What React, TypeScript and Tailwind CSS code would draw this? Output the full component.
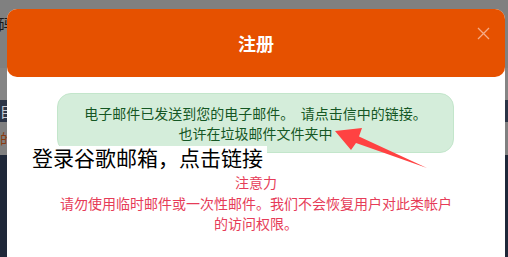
export default function App() {
  return (
    <div className="relative h-[257px] w-[508px] overflow-hidden bg-[#808080] font-['Noto_Sans_CJK_SC','Noto_Sans',sans-serif]">
      {/* page behind the backdrop */}
      <div className="flex h-full flex-col">
        <div className="h-[68px] pt-[14px] text-[15px] leading-5 text-[#1a1a1a]">
          <span className="-ml-[2px]">码</span>
        </div>
        <div className="h-[32px] bg-[#858585]" />
        <div className="h-[22px] bg-[#2b3446] text-[14px] leading-[22px] text-[#c8ccd4]">目</div>
        <div className="h-[33px] pt-[6px] text-[14px] leading-5 text-[#8a3a10]">的</div>
        <div className="flex-1 bg-[#1f2839]" />
      </div>

      {/* modal */}
      <div className="absolute left-[7px] top-[9px] h-[270px] w-[498px] rounded-[10px] bg-white">
        <div className="relative flex h-[68px] items-center justify-center rounded-[10px] bg-[#e65100]">
          <h2 className="text-[18px] font-bold text-white">注册</h2>
          <button className="absolute right-[15px] top-[17px] flex h-[14px] w-[14px] items-center justify-center">
            <svg width="13" height="13" viewBox="0 0 13 13">
              <path d="M1 1L12 12M12 1L1 12" stroke="#f6ab86" strokeWidth="1.3" />
            </svg>
          </button>
        </div>

        <div className="ml-[50px] mt-[16px] w-[397px] rounded-[14px] border border-[#c3e6cb] bg-[#d4edda] py-[9px] text-center text-[14px] leading-5 text-[#155724]">
          电子邮件已发送到您的电子邮件。&nbsp; 请点击信中的链接。
          <br />
          也许在垃圾邮件文件夹中
        </div>

        <div className="mt-[19px] text-center text-[14px] leading-[20.5px] text-[#e63c58]">
          注意力
          <br />
          请勿使用临时邮件或一次性邮件。我们不会恢复用户对此类帐户
          <br />
          的访问权限。
        </div>
      </div>

      {/* annotation */}
      <div className="absolute left-[32px] top-[146px] bg-white pr-1 text-[21px] leading-[22px] text-black">
        登录谷歌邮箱，点击链接
      </div>
      <svg className="absolute left-0 top-0" width="508" height="257" viewBox="0 0 508 257">
        <polygon points="335,131 362,128 359,136.5 427,168 356,143 351,150" fill="#ff4242" />
      </svg>
    </div>
  )
}
